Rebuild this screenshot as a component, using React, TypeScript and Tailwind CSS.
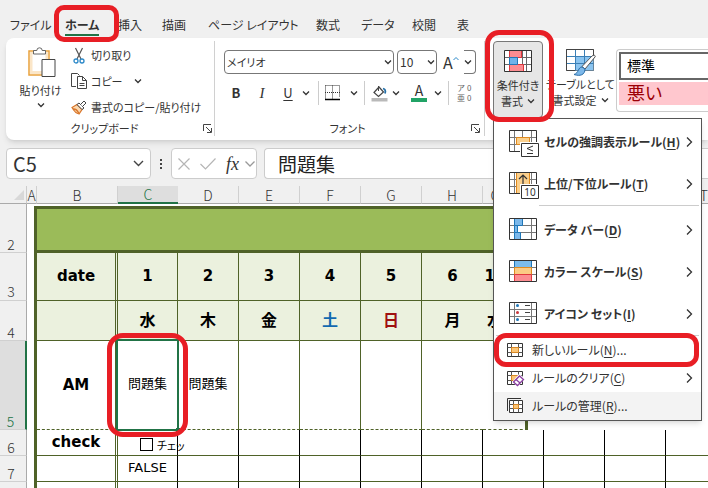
import React from 'react';

type IconProps = { className?: string };

// Small chevron used on every drop-down
const Chevron = ({ className = '' }: IconProps) => (
  <svg width="8" height="6" viewBox="0 0 8 6" className={className} fill="none" stroke="#333" strokeWidth="1.3">
    <path d="M1 1.5 4 4.5 7 1.5" />
  </svg>
);

const Launcher = () => (
  <svg width="9" height="9" viewBox="0 0 9 9" fill="none" stroke="#444">
    <path d="M.5 7V.5H8M3 3l5 5M8.500 4v4.500H4" />
  </svg>
);

const PasteIcon = () => (
  <svg width="30" height="32" viewBox="0 0 30 32" fill="none">
    <path d="M3 5h20v24H3z" fill="#fff" stroke="#e9a13b" strokeWidth="1.5" />
    <path d="M4 6h18v22H4z" fill="#fbe6c8" />
    <path d="M6.500 8h13v17h-13z" fill="#fff" />
    <path d="M7.500 8V4.500h3.300a2.700 2.700 0 0 1 5.400 0h3.300V8z" fill="#fff" stroke="#666" />
    <path d="M16 13.500h13v17H16z" fill="#fff" stroke="#444" />
  </svg>
);

const CutIcon = () => (
  <svg width="12" height="17" viewBox="0 0 12 17" fill="none">
    <path d="M2.500 1 8 12M9.500 1 4 12" stroke="#555" strokeWidth="1.200" />
    <circle cx="3" cy="14" r="2" stroke="#2b88c8" strokeWidth="1.300" />
    <circle cx="9" cy="14" r="2" stroke="#2b88c8" strokeWidth="1.300" />
  </svg>
);

const CopyIcon = () => (
  <svg width="17" height="17" viewBox="0 0 17 17" fill="none" stroke="#444">
    <path d="M5 13.500H.5V.5h6l2 2" />
    <path d="M6.500 3.500h5l4 4v8h-9z" fill="#fff" />
    <path d="M11.500 3.500v4h4M8.500 10.500h5M8.500 12.500h5" />
  </svg>
);

const PainterIcon = () => (
  <svg width="16" height="15" viewBox="0 0 16 15" fill="none">
    <path d="M1 7.500 6 4.500l5 5-3 4.500c-3-.5-5-3-7-6.500z" fill="#fbd9b0" stroke="#d9762b" strokeWidth="1.200" />
    <path d="M2 9c3 0 4 1 6 4.500" stroke="#d9762b" strokeWidth="1.500" />
    <path d="M6 4.500 8 3l5 5-2 1.500z" fill="#fff" stroke="#444" />
    <path d="m9.500 4.500 3.500-3.500 2 2-3.500 3.500" fill="#fff" stroke="#444" />
  </svg>
);

const BordersIcon = () => (
  <svg width="15" height="16" viewBox="0 0 15 16" fill="none" stroke="#333">
    <path d="M.5.5h14v12M.5.5v13M7.500.5v13M0 7.500h15" strokeDasharray="1 1" />
    <path d="M0 14.500h15" stroke="#000" strokeWidth="1.500" />
  </svg>
);

const FillIcon = () => (
  <svg width="17" height="17" viewBox="0 0 17 17" fill="none">
    <path d="M3 7.500 8 2l4.500 5-5 4.500z" stroke="#444" strokeWidth="1.200" />
    <path d="M7.500 1v5" stroke="#444" />
    <path d="M12 3.500c2 .5 3 2 2 5" stroke="#2470a8" strokeWidth="1.800" />
    <path d="M.5 13h16v3.500H.5z" fill="#b9b9b9" />
  </svg>
);

// 4 x 3 grid shared by the conditional formatting icons
const Grid = ({ children }: { children?: React.ReactNode }) => (
  <svg width="28" height="24" viewBox="0 0 28 24" fill="none" className="overflow-visible">
    <path d="M.5.5h27v21H.5z" fill="#fff" />
    <path d="M5.500.5v21M22.500.5v21M.5 7.500h27M.5 14.500h27" stroke="#777" />
    {children}
    <path d="M27.500 12V.5H.5v21H11" stroke="#333" />
  </svg>
);

const HighlightIcon = () => (
  <Grid>
    <path d="M13.500.5v7" stroke="#777" />
    <path d="M7.500 7.500h13v7h-13z" fill="#fbd08d" stroke="#e08a1e" />
    <path d="M11 12h20v16H11z" fill="#fff" />
    <path d="M12.500 13.500h17v13h-17z" fill="#fff" stroke="#333" />
    <path d="m24 16-6 2.500 6 2.500M18 23.500h6" stroke="#333" />
  </Grid>
);

const TopBottomIcon = () => (
  <Grid>
    <path d="M7.500.5h13v21h-13z" fill="#fbd08d" stroke="#e08a1e" />
    <path d="M14 14V3M10 7l4-4 4 4" stroke="#333" strokeWidth="1.200" />
    <path d="M11 12h20v16H11z" fill="#fff" />
    <path d="M12.500 13.500h17v13h-17z" fill="#fff" stroke="#333" />
    <text x="21" y="24" fontSize="10" fontWeight="400" textAnchor="middle" fill="#333" fontFamily="Noto Sans">10</text>
  </Grid>
);

const DataBarIcon = () => (
  <Grid>
    <path d="M5.500.5h8v7h-8zM5.500 14.500h6v7h-6z" fill="#7cb8ea" stroke="#1f77b8" />
    <path d="M5.500 7.500h3v7h-3z" fill="#7cb8ea" stroke="#1f77b8" />
    <path d="M11 21.500h16.500V12" stroke="#333" />
  </Grid>
);

const ColorScaleIcon = () => (
  <Grid>
    <path d="M5.500.5h17v7h-17z" fill="#7cbcec" stroke="#1f77b8" />
    <path d="M5.500 7.500h17v7h-17z" fill="#fbcb84" stroke="#e08a1e" />
    <path d="M5.500 14.500h17v7h-17z" fill="#fb8c91" stroke="#e0373d" />
    <path d="M11 21.500h16.500V12" stroke="#333" />
  </Grid>
);

const IconSetIcon = () => (
  <Grid>
    <path d="M16 3.500h5M16 10.500h5M16 17.500h5" stroke="#444" />
    <circle cx="8.500" cy="3.500" r="1.500" fill="#1f77b8" />
    <circle cx="8.500" cy="10.500" r="1.500" fill="#c8373d" />
    <circle cx="8.500" cy="17.500" r="1.500" fill="#1f77b8" />
    <path d="M11 21.500h16.500V12" stroke="#333" />
  </Grid>
);

const RuleGrid = ({ children }: { children?: React.ReactNode }) => (
  <svg width="17" height="15" viewBox="0 0 17 15" fill="none" className="overflow-visible">
    <path d="M.5.5h15v13H.5z" fill="#fff" stroke="#333" />
    <path d="M4.500.5v13M11.500.5v13M.5 4.500h15M.5 9.500h15" stroke="#555" />
    <path d="M4.500 4.500h7v5h-7z" fill="#fbc677" stroke="#d98723" />
    {children}
  </svg>
);

const ClearIcon = () => (
  <RuleGrid>
    <path d="M5 11 12 3l6 4-7 9z" fill="#fff" />
    <path d="m6.500 11 6-6 4 3.500-6 6z" fill="#fff" stroke="#8a3fa0" strokeWidth="1.300" />
    <path d="m9 8.500 4 3.500" stroke="#8a3fa0" strokeWidth="1.300" />
  </RuleGrid>
);

const ManageIcon = () => (
  <svg width="17" height="16" viewBox="0 0 17 16" fill="none">
    <path d="M.5 13V.5H14" stroke="#333" />
    <path d="M2.500 2.500h13v12h-13z" fill="#fff" stroke="#333" />
    <path d="M6.500 2.500v12M11.500 2.500v12M2.500 6.500h13M2.500 10.500h13" stroke="#555" />
    <path d="M6.500 6.500h5v4h-5z" fill="#fbc677" stroke="#d98723" />
  </svg>
);

const CondFormatIcon = () => (
  <svg width="28" height="23" viewBox="0 0 28 23" fill="none">
    <path d="M.5.5h27v21H.5z" fill="#fff" />
    <path d="M5.500.5v21M18.500.5v21M22.500.5v21M.5 7.500h27M.5 14.500h27" stroke="#666" />
    <path d="M5.500.5h12v7h-12zM5.500 14.500h14v7h-14z" fill="#fb8c91" stroke="#e0373d" />
    <path d="M5.500 7.500h8v7h-8z" fill="#6db3ea" stroke="#1f77b8" />
    <path d="M.5.5h27v21H.5z" stroke="#333" />
  </svg>
);

const TableFormatIcon = () => (
  <svg width="30" height="28" viewBox="0 0 30 28" fill="none">
    <path d="M.5.5h27v21H.5z" fill="#fff" stroke="#444" />
    <path d="M9.500 7.500h18v14h-18z" fill="#8ac4f0" />
    <path d="M9.500.5v21M18.500.5v21M.5 7.500h27M.5 14.500h27" stroke="#3b7fb5" />
    <path d="M.5 21.500V.5h27" stroke="#444" />
    <path d="M29 8 19 20l-3-2.500L26 7c2-1.500 4-.5 3 1z" fill="#fff" stroke="#555" />
    <path d="M16 18c-4 0-3 6-8 7.500 6 2 11 .5 11-5.500z" fill="#7cb8ea" stroke="#2b6ea8" />
  </svg>
);

const tabs = [
  { label: 'ファイル', width: 'w-[55px]' },
  { label: 'ホーム', width: 'w-[53px]', active: true },
  { label: '挿入', width: 'w-[44px]' },
  { label: '描画', width: 'w-[46px]' },
  { label: 'ページ レイアウト', width: 'w-[108px]' },
  { label: '数式', width: 'w-[45px]' },
  { label: 'データ', width: 'w-[51px]' },
  { label: '校閲', width: 'w-[45px]' },
  { label: '表', width: 'w-[12px]' },
];

const bigItems = [
  { label: 'セルの強調表示ルール', accessKey: 'H', icon: <HighlightIcon /> },
  { label: '上位/下位ルール', accessKey: 'T', icon: <TopBottomIcon /> },
  { label: 'データ バー', accessKey: 'D', icon: <DataBarIcon /> },
  { label: 'カラー スケール', accessKey: 'S', icon: <ColorScaleIcon /> },
  { label: 'アイコン セット', accessKey: 'I', icon: <IconSetIcon /> },
];

const MenuArrow = () => (
  <svg width="7" height="12" viewBox="0 0 7 12" fill="none" stroke="#333" strokeWidth="1.300" className="ml-auto mr-2 shrink-0">
    <path d="M1 1.500 5.500 6 1 10.500" />
  </svg>
);

const BigItem = ({ item }: { item: (typeof bigItems)[number] }) => (
  <button role="menuitem" className="flex h-[42px] w-full items-center pl-[15px] text-left text-[12px] font-bold text-[#333]">
    <span className="w-[35px] shrink-0">{item.icon}</span>
    <span className="whitespace-nowrap">
      {item.label}(<u className="underline-offset-2">{item.accessKey}</u>)
    </span>
    <MenuArrow />
  </button>
);

function CondFormatMenu() {
  return (
    <div role="menu" className="absolute left-0 top-full z-30 w-[209px] border border-[#555] bg-white pt-0.5 shadow-md">
      {bigItems.slice(0, 2).map((item) => <BigItem key={item.accessKey} item={item} />)}
      <div className="mb-[3px] ml-[45px] mr-0.5 h-px bg-[#ccc]" />
      {bigItems.slice(2).map((item) => <BigItem key={item.accessKey} item={item} />)}
      <div className="mx-0.5 h-px bg-[#ccc]" />
      <div className="text-[12px] text-[#333]">
        <button role="menuitem" className="relative flex h-7 w-full items-center pl-[13px]">
          <span className="w-[25px]"><RuleGrid /></span>
          <span>新しいルール(<u className="underline-offset-2">N</u>)...</span>
          <span className="absolute -bottom-[3px] -top-[3px] left-0 right-0.5 rounded-[12px] border-[5px] border-[#e81e25]" />
        </button>
        <button role="menuitem" className="flex h-7 w-full items-center pl-[13px]">
          <span className="w-[25px]"><ClearIcon /></span>
          <span>ルールのクリア(<u className="underline-offset-2">C</u>)</span>
          <MenuArrow />
        </button>
        <button role="menuitem" className="flex h-7 w-full items-center bg-[#f3f3f3] pl-[13px]">
          <span className="w-[25px]"><ManageIcon /></span>
          <span>ルールの管理(<u className="underline-offset-2">R</u>)...</span>
        </button>
      </div>
    </div>
  );
}

function ClipboardGroup() {
  return (
    <section className="flex w-[209px] shrink-0 flex-col border-r border-[#d0d0d0] text-[11px]">
      <div className="mt-px flex h-[78px] shrink-0">
        <button className="flex w-[65px] flex-col items-center pl-1 pt-1 leading-4">
          <PasteIcon />
          <span className="mt-1">貼り付け</span>
          <Chevron className="mt-1" />
        </button>
        <div className="flex flex-col">
          <button className="flex h-[26px] items-center">
            <span className="flex w-5 pl-0.5"><CutIcon /></span>
            <span>切り取り</span>
          </button>
          <button className="flex h-[26px] items-center">
            <span className="w-5"><CopyIcon /></span>
            <span className="w-[43px] text-left">コピー</span>
            <Chevron />
          </button>
          <button className="flex h-[26px] items-center">
            <span className="w-5"><PainterIcon /></span>
            <span>書式のコピー/貼り付け</span>
          </button>
        </div>
      </div>
      <footer className="flex h-4 items-center">
        <span className="flex-1 text-center">クリップボード</span>
        <span className="mr-0.5"><Launcher /></span>
      </footer>
    </section>
  );
}

function FontGroup() {
  return (
    <section className="flex w-[270px] shrink-0 flex-col border-r border-[#d0d0d0] pl-[9px]">
      <div className="mt-[9px] flex h-6 items-center text-[12px]">
        <label className="relative mr-[3px] flex w-[170px] items-center">
          <select aria-label="フォント" className="h-6 w-full appearance-none rounded border border-[#777] bg-white pl-0.5 text-[11px]">
            <option>メイリオ</option>
          </select>
          <Chevron className="absolute right-0.5" />
        </label>
        <label className="relative flex w-[40px] items-center">
          <select aria-label="フォント サイズ" className="h-6 w-full appearance-none rounded border border-[#777] bg-white pl-0.5">
            <option>10</option>
          </select>
          <Chevron className="absolute right-0.5" />
        </label>
        <button aria-label="フォント サイズの拡大" className="ml-1.5 flex text-[16px] leading-5">
          A
          <svg width="6" height="5" viewBox="0 0 6 5" fill="none" stroke="#2b88c8" className="mt-1">
            <path d="M.5 4 3 1.500 5.500 4" />
          </svg>
        </button>
        <span className="ml-auto mr-2 flex h-6 w-3 items-center rounded-r border-y border-r border-[#777]">
          <Chevron />
        </span>
      </div>
      <div className="mt-1.5 flex h-[26px] items-center text-[#333]">
        <button className="w-6 text-center text-[13px] font-bold">B</button>
        <button className="w-7 text-center font-['Liberation_Serif'] text-[15px] italic">I</button>
        <button className="w-6 text-center text-[13px] underline underline-offset-2">U</button>
        <Chevron className="ml-0.5 mr-2" />
        <span className="h-6 w-px bg-[#ccc]" />
        <button aria-label="罫線" className="mx-1.5"><BordersIcon /></button>
        <Chevron className="ml-1 mr-1.5" />
        <span className="h-6 w-px bg-[#ccc]" />
        <button aria-label="塗りつぶしの色" className="ml-1.5 mr-1"><FillIcon /></button>
        <Chevron />
        <button aria-label="フォントの色" className="ml-[11px] mr-[7px] flex w-4 flex-col items-center text-[14px] leading-[13px]">
          A
          <span className="mt-px h-1 w-full bg-[#21a366]" />
        </button>
        <Chevron className="mr-1.5" />
        <span className="h-6 w-px bg-[#ccc]" />
        <button className="ml-2 flex items-center gap-0.5 text-[8px] leading-[10px] text-[#666]">
          <span>ア<br />亜</span>
          <span>0<br />0</span>
        </button>
      </div>
      <footer className="mt-auto flex h-4 items-center text-[11px]">
        <span className="flex-1 text-center">フォント</span>
        <span className="mr-1"><Launcher /></span>
      </footer>
    </section>
  );
}

function StyleGroup() {
  return (
    <section className="flex min-w-0 flex-1 items-start pl-2">
      <div className="relative h-[77px] w-[50px] shrink-0">
        <button className="flex h-full w-full flex-col items-center rounded border border-[#777] bg-[#e6e6e6] pt-2 text-[11px] leading-4">
          <CondFormatIcon />
          <span className="mt-1 whitespace-nowrap">条件付き</span>
          <span className="flex items-center gap-1">書式 <Chevron /></span>
        </button>
        <CondFormatMenu />
        <span className="absolute -bottom-1 -left-2 -right-[11px] -top-[11px] z-40 rounded-[14px] border-[5px] border-[#e81e25]" />
      </div>
      <button className="ml-0.5 flex w-[71px] shrink-0 flex-col items-center pt-2 text-[11px] leading-4">
        <TableFormatIcon />
        <span className="-mt-px whitespace-nowrap">テーブルとして</span>
        <span className="flex items-center gap-1">書式設定 <Chevron /></span>
      </button>
      <div className="mt-2 min-w-0 flex-1 rounded-l border border-r-0 border-[#ccc] pb-1.5 pl-0.5">
        <button className="mt-0.5 block h-7 w-full border-2 border-r-0 border-[#666] bg-white pb-0.5 pl-1.5 text-left text-[14px] leading-5 text-black">標準</button>
        <button className="mt-0.5 block h-[23px] w-full overflow-hidden bg-[#ffc7ce] pb-1 pl-2 text-left text-[18px] leading-[18px] text-[#9c0006]">悪い</button>
      </div>
    </section>
  );
}

function FormulaBar() {
  return (
    <div className="flex h-[38px] items-start pl-1.5">
      <div className="flex h-[31px] w-[145px] shrink-0 items-center rounded border border-[#ccc] bg-white pr-1.5">
        <input aria-label="名前ボックス" defaultValue="C5" className="min-w-0 flex-1 pl-1.5 text-[20px] leading-6 text-[#333] outline-none" />
        <svg width="11" height="7" viewBox="0 0 11 7" fill="none" stroke="#444" strokeWidth="1.400"><path d="m1 1 4.500 4.500L10 1" /></svg>
      </div>
      <div className="flex h-[31px] w-5 shrink-0 flex-col items-center justify-center gap-0.5">
        <span className="size-0.5 bg-[#444]" />
        <span className="size-0.5 bg-[#444]" />
        <span className="size-0.5 bg-[#444]" />
      </div>
      <div className="flex h-[31px] w-[86px] shrink-0 items-center rounded border border-[#ccc] bg-white pl-1.5">
        <button aria-label="キャンセル"><svg width="12" height="12" viewBox="0 0 12 12" stroke="#b5b5b5" strokeWidth="1.200"><path d="m.5.5 11 11M11.500.5l-11 11" /></svg></button>
        <button aria-label="入力" className="ml-2.5"><svg width="16" height="12" viewBox="0 0 16 12" fill="none" stroke="#b5b5b5" strokeWidth="1.200"><path d="m.5 6 5 5L15.500.5" /></svg></button>
        <button className="ml-2.5 font-['Liberation_Serif'] text-[18px] italic leading-6 text-[#333]">fx</button>
        <svg width="10" height="6" viewBox="0 0 10 6" fill="none" stroke="#999" strokeWidth="1.300" className="ml-1.5"><path d="m.5.5 4.500 4.500 4.500-4.500" /></svg>
      </div>
      <input aria-label="数式バー" defaultValue="問題集" className="ml-[7px] h-[31px] min-w-0 flex-1 rounded-l border border-r-0 border-[#ccc] bg-white pl-[13px] text-[19px] text-[#222] outline-none" />
    </div>
  );
}

const days = [
  { date: '1', day: '水' },
  { date: '2', day: '木' },
  { date: '3', day: '金' },
  { date: '4', day: '土', color: 'text-[#1269b0]' },
  { date: '5', day: '日', color: 'text-[#a01010]' },
  { date: '6', day: '月', noLine: true },
  { date: '15', day: '水', last: true },
];

const colHeaders = ['A', 'B', 'C', 'D', 'E', 'F', 'G', 'H', 'Q', '', '', '', 'T'];

const RowHeader = ({ children, active }: { children?: React.ReactNode; active?: boolean }) => (
  <th
    scope="row"
    className={
      active
        ? 'border-b border-r-2 border-b-[#d0d0d0] border-r-[#217346] bg-[#dedede] pr-1 align-bottom text-[14px] font-light leading-4 text-[#217346]'
        : 'border-b border-r border-b-[#d0d0d0] border-r-[#aaa] bg-[#f0f0f0] pr-1 align-bottom text-[14px] font-light leading-4 text-[#333]'
    }
  >
    {children}
  </th>
);

const edge = (d: (typeof days)[number]) =>
  d.last ? 'border-r-[3px] border-r-[#4f6228] pr-[18px]' : d.noLine ? '' : 'border-r border-r-[#4f6228]';

const GapCell = () => <td className="border-r-[3px] border-[#4f6228]" />;

// Empty cells to the right of column C in the lower rows
const lowerLines = [true, true, true, true, true, false, true, true, true, false];

const LowerCells = () => (
  <>
    {lowerLines.map((line, i) => (
      <td key={i} className={line ? 'border-b border-r border-b-[#4f6228] border-r-black' : 'border-b border-b-[#4f6228]'} />
    ))}
  </>
);

function Sheet() {
  return (
    <table className="w-full table-fixed border-separate border-spacing-0 bg-white text-center text-black">
      <colgroup>
        <col className="w-[27px]" />
        <col className="w-[10px]" />
        <col className="w-[81px]" />
        <col className="w-[60px]" />
        <col className="w-[61px]" />
        <col className="w-[61px]" />
        <col className="w-[61px]" />
        <col className="w-[61px]" />
        <col className="w-[61px]" />
        <col className="w-[45px]" />
        <col className="w-[16px]" />
        <col className="w-[61px]" />
        <col className="w-[61px]" />
        <col />
      </colgroup>
      <thead>
        <tr className="h-[18px] bg-[#f0f0f0] text-[14px] leading-4 text-[#333]">
          <th className="border-b border-r border-b-[#aaa] border-r-[#ccc]">
            <svg width="10" height="10" viewBox="0 0 10 10" className="ml-3.5"><path d="M10 0v10H0z" fill="#d8d8d8" /></svg>
          </th>
          {colHeaders.map((c, i) => (
            <th
              key={i}
              scope="col"
              className={
                c === 'C'
                  ? 'border-b-2 border-b-[#217346] bg-[#dedede] font-light text-[#217346]'
                  : c === 'T'
                    ? 'border-b border-b-[#aaa] text-right font-light'
                    : c === 'Q'
                      ? 'border-b border-b-[#aaa] pr-5 font-light'
                      : 'border-b border-r border-b-[#aaa] border-r-[#d0d0d0] font-light'
              }
            >
              {c}
            </th>
          ))}
        </tr>
      </thead>
      <tbody>
        <tr className="h-0.5">
          <td className="border-r border-[#aaa] bg-[#f0f0f0]" />
          <td colSpan={13} />
        </tr>
        <tr className="h-[47px]">
          <RowHeader>2</RowHeader>
          <GapCell />
          <td colSpan={8} className="border-y-[3px] border-r-[3px] border-[#4f6228] bg-[#9bbb59]" />
          <td colSpan={4} />
        </tr>
        <tr className="h-12 bg-[#ebf1de] font-['DejaVu_Sans'] text-[15px] font-bold">
          <RowHeader><span className="font-['Noto_Sans_CJK_JP']">3</span></RowHeader>
          <td className="border-r-[3px] border-[#4f6228] bg-white" />
          <td className="border-b border-r-[3px] border-b-[#4f6228] border-r-[#4f6228] [border-right-style:double]">date</td>
          {days.map((d) => (
            <td key={d.date} className={`border-b border-b-[#4f6228] ${edge(d)}`}>{d.date}</td>
          ))}
          <td colSpan={4} className="bg-white" />
        </tr>
        <tr className="h-10 bg-[#ebf1de] text-[16px] font-bold leading-6">
          <RowHeader>4</RowHeader>
          <td className="border-r-[3px] border-[#4f6228] bg-white" />
          <td className="border-b border-r-[3px] border-b-[#4f6228] border-r-[#4f6228] [border-right-style:double]" />
          {days.map((d) => (
            <td key={d.date} className={`border-b border-b-[#4f6228] pb-1 ${edge(d)} ${d.color ?? ''}`}>{d.day}</td>
          ))}
          <td colSpan={4} className="bg-white" />
        </tr>
        <tr className="h-[89px] text-[13px]">
          <RowHeader active>5</RowHeader>
          <GapCell />
          <td className="border-b border-r-[3px] border-[#4f6228] font-['DejaVu_Sans'] text-[15px] font-bold [border-bottom-style:dashed] [border-right-style:double]">AM</td>
          {days.map((d, i) => (
            <td key={d.date} className={`relative border-b border-b-[#4f6228] pb-1 [border-bottom-style:dashed] ${edge(d)}`}>
              {i < 2 && '問題集'}
              {i === 0 && (
                <>
                  <span className="absolute -bottom-0.5 -left-0.5 -right-0.5 -top-0.5 z-10 border-2 border-[#217346]" />
                  <span className="absolute -bottom-[3px] -right-[3px] z-10 size-1 bg-[#217346]" />
                  <span className="absolute -bottom-2 -left-[11px] -right-[11px] -top-2 z-20 rounded-[16px] border-[5px] border-[#e81e25]" />
                </>
              )}
            </td>
          ))}
          <td colSpan={4} />
        </tr>
        <tr className="h-[26px]">
          <RowHeader>6</RowHeader>
          <GapCell />
          <td className="border-b border-r-[3px] border-[#4f6228] pb-0.5 font-['DejaVu_Sans'] text-[15px] font-bold leading-5 [border-right-style:double]">check</td>
          <td className="border-b border-r border-b-[#4f6228] border-r-black">
            <label className="flex items-center gap-1 whitespace-nowrap pl-[22px] pt-1 text-[11px] leading-4">
              <input type="checkbox" className="size-[13px] shrink-0 appearance-none border border-black bg-white" />
              チェッ
            </label>
          </td>
          <LowerCells />
        </tr>
        <tr className="h-[26px]">
          <RowHeader>7</RowHeader>
          <GapCell />
          <td className="border-b border-r-[3px] border-[#4f6228] [border-right-style:double]" />
          <td className="border-b border-r border-b-[#4f6228] border-r-black pb-0.5 font-['DejaVu_Sans'] text-[13px] leading-4">FALSE</td>
          <LowerCells />
        </tr>
        <tr className="h-1.5">
          <td className="border-r border-[#aaa] bg-[#f0f0f0]" />
          <GapCell />
          <td className="border-r-[3px] border-[#4f6228] [border-right-style:double]" />
          <td className="border-r border-black" />
          {lowerLines.map((line, i) => (
            <td key={i} className={line ? 'border-r border-black' : ''} />
          ))}
        </tr>
      </tbody>
    </table>
  );
}

export default function App() {
  return (
    <div className="min-h-screen overflow-hidden bg-[#f0f0f0] font-['Noto_Sans_CJK_JP',sans-serif] text-[#333] [font-feature-settings:'palt']">
      <nav className="flex h-[38px] items-end pb-0.5 pl-2.5 text-[12px] leading-[18px]">
        {tabs.map((tab) => (
          <div key={tab.label} className={`relative shrink-0 ${tab.width}`}>
            <button className={tab.active ? 'border-b-2 border-[#217346] font-bold' : 'overflow-hidden whitespace-nowrap border-b-2 border-transparent'}>
              {tab.label}
            </button>
            {tab.active && (
              <span className="absolute -bottom-1.5 -left-[11px] -right-px -top-[11px] z-10 rounded-[10px] border-[5px] border-[#e81e25]" />
            )}
          </div>
        ))}
      </nav>
      <div className="mb-2 ml-1.5 flex h-[102px] rounded-l-lg bg-white pb-1 pt-[3px] text-[#333] shadow-md">
        <ClipboardGroup />
        <FontGroup />
        <StyleGroup />
      </div>
      <FormulaBar />
      <Sheet />
    </div>
  );
}
